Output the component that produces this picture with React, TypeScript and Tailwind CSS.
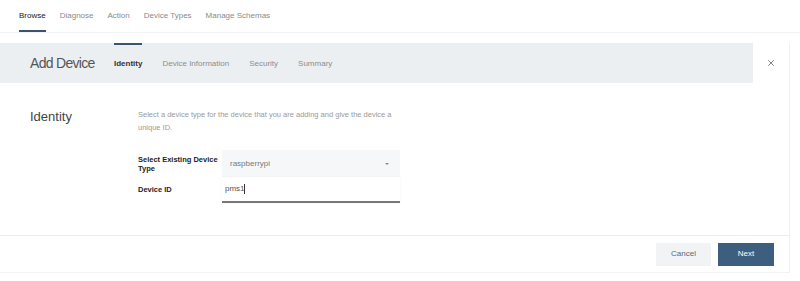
import { X } from 'lucide-react';

const navItems = ['Browse', 'Diagnose', 'Action', 'Device Types', 'Manage Schemas'];
const steps = ['Identity', 'Device Information', 'Security', 'Summary'];

export default function App() {
  return (
    <div className="w-[800px] h-[281px] bg-white overflow-hidden text-[#3c3c3c]" style={{ fontFamily: '"Liberation Sans", Arial, sans-serif' }}>
      {/* Top nav */}
      <nav className="h-[33px] flex items-stretch gap-[14px] pl-[19px] border-b border-[#f1f2f4]">
        {navItems.map((item, i) => (
          <div
            key={item}
            className={`flex items-center text-[8px] pt-[2px] border-b-2 ${i === 0 ? 'border-[#3b536b] text-[#222]' : 'border-transparent text-[#8a8a8a]'}`}
          >
            {item}
          </div>
        ))}
      </nav>

      {/* Card */}
      <div className="w-[790px] mt-[10px] border-r border-[#f0f0f0]">
        {/* Header */}
        <div className="h-[40px] flex">
          <div className="flex-1 bg-[#eceff2] flex items-stretch pl-[30px]">
            <div className="flex items-center text-[14px] tracking-[-0.7px] font-light text-[#555] w-[84px]">Add Device</div>
            <div className="flex items-stretch gap-[20px]">
              {steps.map((s, i) => (
                <div
                  key={s}
                  className={`flex items-center text-[8px] border-t-2 ${i === 0 ? 'border-[#3b536b] font-bold text-[#333]' : 'border-transparent text-[#8d8d8d]'}`}
                >
                  {s}
                </div>
              ))}
            </div>
          </div>
          <div className="w-[36px] bg-white flex items-center justify-center">
            <X size={10} strokeWidth={1.6} className="text-[#444]" />
          </div>
        </div>

        {/* Body */}
        <div className="h-[153px] border-b border-[#eeeeee] flex pt-[25px]">
          <div className="w-[138px] pl-[30px] text-[13px] font-light text-[#444] leading-[16px] pt-[1px]">Identity</div>
          <div className="flex flex-col">
            <p className="w-[262px] text-[7.5px] leading-[13px] text-[#9a9a9a]">
              Select a device type for the device that you are adding and give the device a unique ID.
            </p>
            <div className="mt-[16px] flex flex-col">
              <div className="flex items-center h-[27px]">
                <div className="w-[84px] text-[7.5px] font-bold leading-[9px] text-[#222]">Select Existing Device Type</div>
                <div className="w-[178px] h-full bg-[#f6f7f8] flex items-center justify-between pl-[8px] pr-[11px] text-[8px] text-[#777]">
                  <span>raspberrypi</span>
                  <span className="w-0 h-0 border-l-[2.5px] border-r-[2.5px] border-t-[2.5px] border-l-transparent border-r-transparent border-t-[#888]" />
                </div>
              </div>
              <div className="flex items-center h-[26px]">
                <div className="w-[84px] text-[7.5px] font-bold text-[#222]">Device ID</div>
                <div className="w-[178px] h-full bg-white border-b-2 border-[#777] shadow-[0_0_2px_rgba(0,0,0,0.06)] flex items-center pl-[3px] text-[8px] text-[#555]">
                  <span>pms1</span>
                  <span className="w-px h-[10px] bg-[#333] -ml-[1px]" />
                </div>
              </div>
            </div>
          </div>
        </div>

        {/* Footer */}
        <div className="h-[37px] border-b border-[#f3f3f3] flex items-center justify-end gap-[7px] pr-[15px]">
          <button className="w-[55px] h-[23px] bg-[#f1f3f5] text-[8px] text-[#666]">Cancel</button>
          <button className="w-[56px] h-[23px] bg-[#3d5e7e] text-[8px] text-white">Next</button>
        </div>
      </div>
    </div>
  );
}
